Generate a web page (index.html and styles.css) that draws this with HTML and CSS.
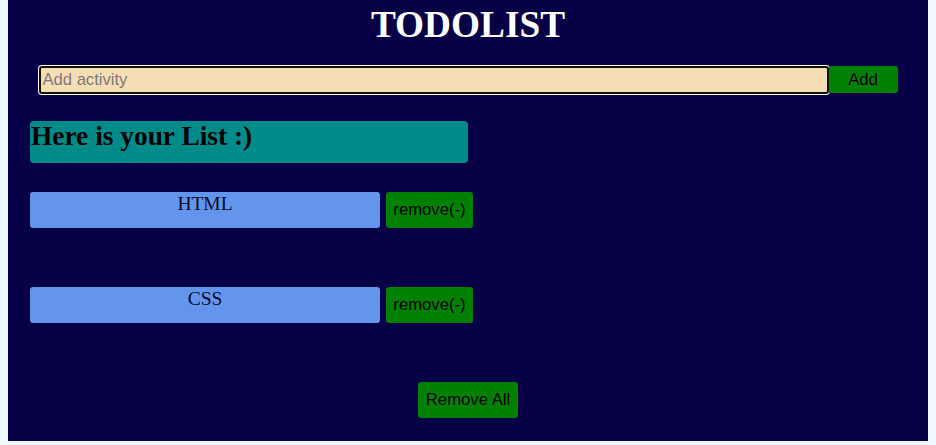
FILE: index.html
```html
<!DOCTYPE html>
<html lang="en">
<head>
<meta charset="utf-8">
<title>TODOLIST</title>
<link rel="stylesheet" href="styles.css">
</head>
<body>
  <div class="app">
    <h1 class="title">TODOLIST</h1>
    <div class="form">
      <input class="field" type="text" placeholder="Add activity">
      <button class="btn add">Add</button>
    </div>
    <h2 class="list-head">Here is your List :)</h2>
    <ul class="list">
      <li class="row">
        <span class="item">HTML</span>
        <button class="btn remove">remove(-)</button>
      </li>
      <li class="row">
        <span class="item">CSS</span>
        <button class="btn remove">remove(-)</button>
      </li>
    </ul>
    <div class="footer">
      <button class="btn remove-all">Remove All</button>
    </div>
  </div>
</body>
</html>
```

FILE: styles.css
```css
html, body {
  margin: 0;
  padding: 0;
}

body {
  background: #f0f8ff;
  padding: 0 8px;
  font-family: "Liberation Serif", "Times New Roman", serif;
}

.app {
  width: 920px;
  height: 441px;
  box-sizing: border-box;
  background: #070046;
  padding: 4px 0 0 22px;
  display: flex;
  flex-direction: column;
}

.title {
  margin: 0 0 0 -22px;
  font-size: 37.3px;
  line-height: 42px;
  font-weight: bold;
  color: #ffffff;
  text-align: center;
}

.form {
  margin: 20px 0 0 -22px;
  display: flex;
  justify-content: center;
  align-items: flex-start;
}

.field {
  width: 790px;
  height: 28px;
  box-sizing: border-box;
  margin: 0;
  padding: 0 2px;
  border: 2px solid #101010;
  border-radius: 3px;
  box-shadow: 0 0 0 1px #ffffff;
  background: #f5deb3;
  font-family: "Liberation Sans", Arial, sans-serif;
  font-size: 16.6px;
  color: #000;
  outline: none;
}

.field::placeholder {
  color: #7a7a7a;
}

.btn {
  margin: 0;
  border: none;
  background: #008000;
  color: #000000;
  font-family: "Liberation Sans", Arial, sans-serif;
  font-size: 16.7px;
  border-radius: 3px;
  padding: 0;
}

.add {
  width: 69px;
  height: 27px;
  border-radius: 0 3px 3px 0;
}

.list-head {
  margin: 27px 0 0 0;
  width: 438px;
  height: 42px;
  box-sizing: border-box;
  padding-left: 1px;
  background: #008b8b;
  border-radius: 4px;
  color: #000000;
  font-size: 27.4px;
  font-weight: bold;
  line-height: 31px;
}

.list {
  list-style: none;
  margin: 29px 0 0 0;
  padding: 0;
  display: flex;
  flex-direction: column;
  gap: 59px;
}

.row {
  display: flex;
  gap: 6px;
}

.item {
  width: 350px;
  height: 36px;
  background: #6495ed;
  border-radius: 3px;
  text-align: center;
  font-size: 19.5px;
  line-height: 23px;
  color: #0a0a2a;
}

.remove {
  width: 87px;
  height: 36px;
}

.footer {
  margin: 59px 0 0 -22px;
  display: flex;
  justify-content: center;
}

.remove-all {
  width: 100px;
  height: 36px;
}
```
